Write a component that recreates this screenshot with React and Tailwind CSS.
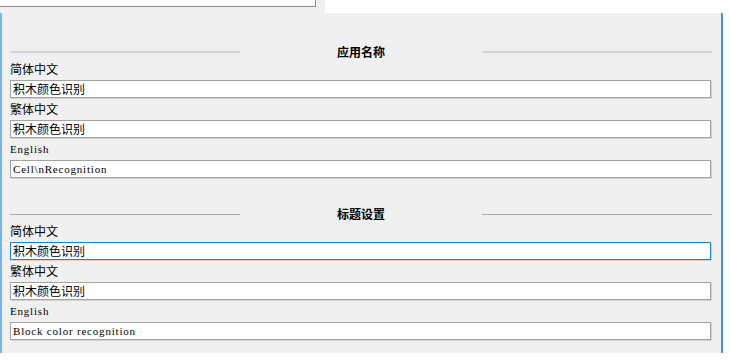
const cjk = 'font-["Noto_Sans_CJK_SC",sans-serif]';
const latin = 'font-["Liberation_Serif",serif] text-[11px] tracking-[0.8px] leading-none text-black';

function Field({ value, mono, focused }) {
  return (
    <div
      className={`h-[18px] w-[701px] bg-white flex items-center pl-[2px] border shadow-[1px_1px_0_#d2d2d2] ${
        focused ? 'border-[#1e7fd8]' : 'border-[#a3a3a3]'
      }`}
    >
      {mono ? (
        <span className={latin}>{value}</span>
      ) : (
        <span className={`${cjk} text-[12px] leading-none text-black`}>{value}</span>
      )}
    </div>
  );
}

function Label({ text, mono }) {
  return (
    <div className="h-[22px] flex items-center">
      {mono ? (
        <span className={latin}>{text}</span>
      ) : (
        <span className={`${cjk} text-[12px] leading-none text-black`}>{text}</span>
      )}
    </div>
  );
}

function Header({ title, strong }) {
  const line = strong ? 'h-[2px] bg-[#d3d3d3]' : 'h-px bg-[#a9a9a9]';
  return (
    <div className="h-[12px] flex items-center w-[702px]">
      <div className={`flex-1 ${line}`} />
      <div className={`w-[242px] text-center ${cjk} text-[12px] font-bold leading-none text-black`}>{title}</div>
      <div className={`flex-1 ${line}`} />
    </div>
  );
}

function Section({ title, strong, values }) {
  return (
    <div className="flex flex-col">
      <Header title={title} strong={strong} />
      <Label text="简体中文" />
      <Field value={values[0]} focused={values[3]} />
      <Label text="繁体中文" />
      <Field value={values[1]} />
      <Label text="English" mono />
      <Field value={values[2]} mono />
    </div>
  );
}

export default function App() {
  return (
    <div className="w-[730px] h-[362px] bg-white overflow-hidden">
      <div className="h-[13px] flex">
        <div className="w-[325px] bg-[#f0f0f0]">
          <div className="w-[316px] h-[7px] bg-white border-b border-r border-[#8c8c8c]" />
        </div>
        <div className="flex-1 bg-white" />
      </div>
      <div className="w-[723px] h-[340px] bg-[#f0f0f0] border-l-2 border-r-2 border-l-[#76b6ee] border-r-[#4b93d8] pl-[8px] pt-[33px]">
        <Section title="应用名称" strong values={['积木颜色识别', '积木颜色识别', 'Cell\\nRecognition', false]} />
        <div className="h-[30px]" />
        <Section title="标题设置" values={['积木颜色识别', '积木颜色识别', 'Block color recognition', true]} />
      </div>
    </div>
  );
}
